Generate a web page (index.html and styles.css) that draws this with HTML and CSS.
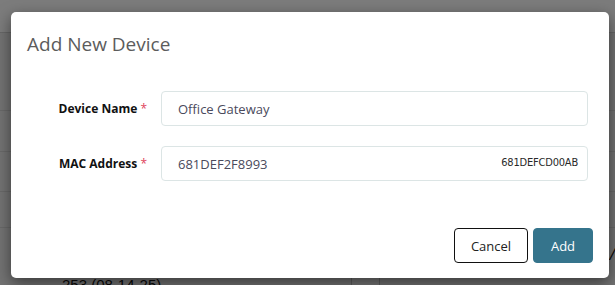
FILE: index.html
```html
<!DOCTYPE html>
<html lang="en">
<head>
<meta charset="utf-8">
<title>Add New Device</title>
<link rel="stylesheet" href="styles.css">
</head>
<body>
<div class="page">
  <div class="topbar"></div>
  <div class="band band-a"></div>
  <div class="band band-b"></div>
  <div class="band band-c"></div>
  <div class="band band-d"></div>
  <div class="band band-e">
    <span class="cell cell-text">253 (08-14-25)</span>
    <span class="cell cell-narrow"></span>
    <span class="cell cell-rest"><span class="slash">/</span></span>
  </div>
</div>
<div class="backdrop"></div>
<div class="modal" role="dialog" aria-labelledby="modal-title">
  <div class="modal-header">
    <h4 id="modal-title" class="modal-title">Add New Device</h4>
  </div>
  <form class="modal-body">
    <div class="form-row">
      <label class="form-label" for="device-name">Device Name <span class="req">*</span></label>
      <div class="field">
        <input id="device-name" class="form-input" type="text" value="Office Gateway">
      </div>
    </div>
    <div class="form-row">
      <label class="form-label" for="mac">MAC Address <span class="req">*</span></label>
      <div class="field">
        <input id="mac" class="form-input" type="text" value="681DEF2F8993">
        <span class="field-hint">681DEFCD00AB</span>
      </div>
    </div>
  </form>
  <div class="modal-footer">
    <button class="btn btn-cancel" type="button">Cancel</button>
    <button class="btn btn-add" type="button">Add</button>
  </div>
</div>
</body>
</html>
```

FILE: styles.css
```css
* { box-sizing: border-box; }

html, body {
  margin: 0;
  padding: 0;
  width: 615px;
  height: 285px;
  overflow: hidden;
  font-family: "Open Sans", "Noto Sans", sans-serif;
}

/* underlying page */
.page {
  width: 615px;
  height: 285px;
  background: #e6e6e6;
  display: flex;
  flex-direction: column;
  overflow: hidden;
}
.topbar {
  height: 33px;
  flex: none;
  background: #f8f8f8;
  border-bottom: 1px solid #cfcfcf;
}
.band {
  flex: none;
  border-bottom: 1px solid #d2d2d2;
}
.band-a { height: 78px; }
.band-b { height: 41px; }
.band-c { height: 40px; }
.band-d { height: 36px; }
.band-e {
  height: 60px;
  display: flex;
  align-items: flex-end;
  border-bottom: none;
}
.cell {
  height: 30px;
  display: block;
  overflow: hidden;
}
.cell-text {
  width: 352px;
  padding-left: 62px;
  padding-top: 18px;
  font-size: 15px;
  color: #111;
  font-family: "Liberation Sans", sans-serif;
  border-right: 1px solid #bbb;
  line-height: 18px;
  white-space: nowrap;
}
.cell-narrow {
  width: 28px;
  border-right: 1px solid #bbb;
  background: #ececec;
}
.cell-rest {
  flex: 1;
  position: relative;
  overflow: visible;
}
.slash {
  position: absolute;
  right: 0;
  top: -12px;
  font-size: 16px;
  line-height: 16px;
  color: #111;
  font-style: italic;
}

.backdrop {
  position: absolute;
  inset: 0;
  background: rgba(0, 0, 0, 0.5);
}

/* modal */
.modal {
  position: absolute;
  left: 11px;
  top: 12px;
  width: 598px;
  height: 266px;
  background: #fff;
  border-radius: 5px;
  box-shadow: 0 5px 15px rgba(0, 0, 0, 0.5);
  display: flex;
  flex-direction: column;
}
.modal-header {
  padding: 17px 16px 0;
}
.modal-title {
  margin: 0;
  font-size: 19px;
  line-height: 30px;
  font-weight: 400;
  color: #5c5c5c;
}
.modal-body {
  margin: 32px 0 0;
  padding: 0 21px 0 0;
  display: flex;
  flex-direction: column;
  gap: 20px;
}
.form-row {
  display: grid;
  grid-template-columns: 136px 1fr;
  column-gap: 14px;
  align-items: center;
  height: 35px;
}
.form-label {
  text-align: right;
  font-size: 12px;
  font-weight: 700;
  color: #111;
}
.req {
  color: #e0435c;
  font-weight: 400;
}
.field {
  position: relative;
  height: 35px;
}
.form-input {
  width: 100%;
  height: 35px;
  border: 1px solid #dce5e5;
  border-radius: 4px;
  padding: 0 16px;
  font-family: "Open Sans", "Noto Sans", sans-serif;
  font-size: 13px;
  color: #4a4a5c;
  background: #fff;
  outline: none;
}
.field-hint {
  position: absolute;
  right: 10px;
  top: 0;
  line-height: 33px;
  font-family: "DejaVu Sans Condensed", "Liberation Sans Narrow", "Liberation Sans", sans-serif;
  font-stretch: condensed;
  font-size: 11px;
  color: #2a2a2a;
  letter-spacing: -0.2px;
}

.modal-footer {
  margin-top: auto;
  padding: 0 16px 15px;
  display: flex;
  justify-content: flex-end;
  gap: 5px;
}
.btn {
  height: 35px;
  border-radius: 4px;
  font-family: "Open Sans", "Noto Sans", sans-serif;
  font-size: 13px;
  cursor: pointer;
}
.btn-cancel {
  width: 74px;
  background: #fff;
  border: 1px solid #111;
  color: #222;
}
.btn-add {
  width: 60px;
  background: #35748c;
  border: 1px solid #35748c;
  color: #fff;
}
```
